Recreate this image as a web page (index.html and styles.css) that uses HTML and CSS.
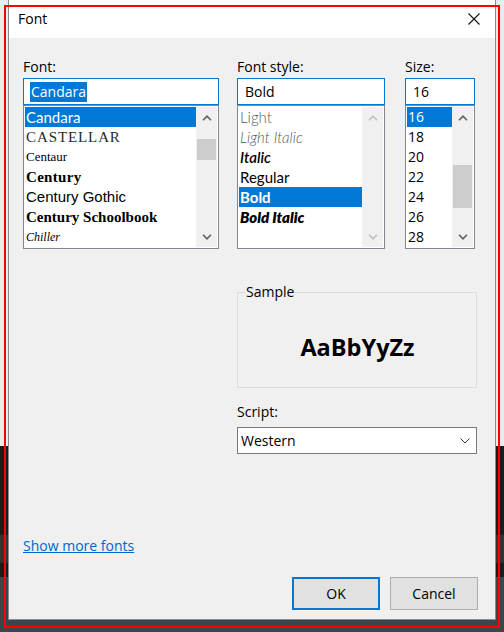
FILE: index.html
```html
<!DOCTYPE html>
<html lang="en">
<head>
<meta charset="utf-8">
<title>Font</title>
<link rel="stylesheet" href="styles.css">
</head>
<body>
<div class="desktop">
  <div class="dialog">
    <div class="titlebar">
      <span class="title">Font</span>
      <svg class="close" viewBox="0 0 12 12" width="12" height="12"><path d="M0.5 0.5L11.5 11.5M11.5 0.5L0.5 11.5"/></svg>
    </div>
    <div class="body">
      <div class="pickers">
        <div class="col col-font">
          <div class="lbl">Font:</div>
          <div class="field focused"><span class="sel-text">Candara</span></div>
          <div class="list">
            <ul class="rows">
              <li class="row selected f-candara">Candara</li>
              <li class="row f-castellar">CASTELLAR</li>
              <li class="row f-centaur">Centaur</li>
              <li class="row f-century">Century</li>
              <li class="row f-gothic">Century Gothic</li>
              <li class="row f-school">Century Schoolbook</li>
              <li class="row f-chiller">Chiller</li>
            </ul>
            <div class="sb">
              <div class="sb-btn"><svg viewBox="0 0 10 6" width="10" height="6"><path d="M1 5.2L5 1.2L9 5.2"/></svg></div>
              <div class="sb-track"><div class="thumb thumb-font"></div></div>
              <div class="sb-btn"><svg viewBox="0 0 10 6" width="10" height="6"><path d="M1 0.8L5 4.8L9 0.8"/></svg></div>
            </div>
          </div>
        </div>
        <div class="col col-style">
          <div class="lbl">Font style:</div>
          <div class="field focused"><span class="plain-text">Bold</span></div>
          <div class="list">
            <ul class="rows">
              <li class="row s-light">Light</li>
              <li class="row s-light-italic">Light Italic</li>
              <li class="row s-italic">Italic</li>
              <li class="row s-regular">Regular</li>
              <li class="row selected s-bold">Bold</li>
              <li class="row s-bold-italic">Bold Italic</li>
            </ul>
            <div class="sb disabled">
              <div class="sb-btn"><svg viewBox="0 0 10 6" width="10" height="6"><path d="M1 5.2L5 1.2L9 5.2"/></svg></div>
              <div class="sb-track"></div>
              <div class="sb-btn"><svg viewBox="0 0 10 6" width="10" height="6"><path d="M1 0.8L5 4.8L9 0.8"/></svg></div>
            </div>
          </div>
        </div>
        <div class="col col-size">
          <div class="lbl">Size:</div>
          <div class="field focused"><span class="plain-text size-text">16</span></div>
          <div class="list">
            <ul class="rows">
              <li class="row selected num">16</li>
              <li class="row num">18</li>
              <li class="row num">20</li>
              <li class="row num">22</li>
              <li class="row num">24</li>
              <li class="row num">26</li>
              <li class="row num">28</li>
            </ul>
            <div class="sb">
              <div class="sb-btn"><svg viewBox="0 0 10 6" width="10" height="6"><path d="M1 5.2L5 1.2L9 5.2"/></svg></div>
              <div class="sb-track"><div class="thumb thumb-size"></div></div>
              <div class="sb-btn"><svg viewBox="0 0 10 6" width="10" height="6"><path d="M1 0.8L5 4.8L9 0.8"/></svg></div>
            </div>
          </div>
        </div>
      </div>

      <div class="lower">
        <fieldset class="sample">
          <legend>Sample</legend>
          <div class="sample-text">AaBbYyZz</div>
        </fieldset>
        <div class="lbl script-lbl">Script:</div>
        <div class="combo">
          <span>Western</span>
          <svg viewBox="0 0 10 6" width="10" height="6"><path d="M0.5 0.5L5 5L9.5 0.5"/></svg>
        </div>
      </div>

      <div class="footer">
        <a class="more" href="#">Show more fonts</a>
        <div class="buttons">
          <button class="btn default">OK</button>
          <button class="btn">Cancel</button>
        </div>
      </div>
    </div>
  </div>
  <div class="frame"></div>
</div>
</body>
</html>
```

FILE: styles.css
```css
* { box-sizing: border-box; }
html, body { margin: 0; padding: 0; }
body {
  width: 504px;
  height: 632px;
  overflow: hidden;
  font-family: "Open Sans", "Noto Sans", sans-serif;
  font-size: 14px;
  color: #000;
}
.desktop {
  position: relative;
  width: 504px;
  height: 632px;
  background: linear-gradient(to bottom,
    #ececec 0, #ececec 446px,
    #1b1b1b 446px, #1b1b1b 535px,
    #323232 535px, #323232 563px,
    #1b1b1b 563px, #1b1b1b 577px,
    #3b464c 577px);
}
.dialog {
  margin-left: 8px;
  width: 488px;
  height: 620px;
  border: 1px solid #8a8a8a;
  border-top: none;
  background: #f0f0f0;
  display: flex;
  flex-direction: column;
}
.titlebar {
  height: 38px;
  flex: none;
  background: #fff;
  display: flex;
  align-items: center;
  justify-content: space-between;
  padding: 0 15px 0 9px;
}
.title { font-size: 14px; line-height: 20px; }
.close path { stroke: #111; stroke-width: 1.1; fill: none; }

.body {
  flex: 1;
  display: flex;
  flex-direction: column;
  padding: 0 18px 9px 14px;
}
.pickers {
  display: grid;
  grid-template-columns: 196px 148px 72px;
  column-gap: 18px;
  margin-top: 19px;
}
.col-size { margin-left: 2px; }
.lbl { line-height: 20px; height: 21px; }
.field {
  height: 27px;
  background: #fff;
  border: 1px solid #7a7a7a;
  display: flex;
  align-items: center;
  padding-left: 6px;
}
.field.focused { border-color: #0078d7; }
.sel-text {
  background: #0078d7;
  color: #fff;
  line-height: 20px;
  padding: 0 1px;
}
.plain-text { padding-left: 1px; line-height: 20px; }
.size-text { padding-left: 1px; }
.list {
  height: 144px;
  background: #fff;
  border: 1px solid #828790;
  padding: 1px;
  display: flex;
}
.rows {
  list-style: none;
  margin: 0;
  padding: 0;
  flex: 1;
  overflow: hidden;
}
.row {
  height: 20px;
  line-height: 20px;
  padding-left: 1px;
  white-space: nowrap;
  overflow: hidden;
}
.row.selected { background: #0078d7; color: #fff; }

.sb {
  width: 21px;
  flex: none;
  background: #f0f0f0;
  display: flex;
  flex-direction: column;
}
.sb-btn {
  height: 21px;
  display: flex;
  align-items: center;
  justify-content: center;
}
.sb-btn path { stroke: #606060; stroke-width: 1.6; fill: none; }
.sb.disabled .sb-btn path { stroke: #c0c0c0; }
.sb-track { flex: 1; }
.thumb { background: #cdcdcd; margin: 0 1px; }
.thumb-font { margin-top: 11px; height: 21px; }
.thumb-size { margin-top: 37px; height: 43px; }

/* font list previews */
.f-candara { font-family: Lato, sans-serif; font-size: 15px; }
.f-castellar { font-family: "Liberation Serif", serif; font-size: 15px; letter-spacing: 0.9px; color: #2a2a2a; }
.f-centaur { font-family: "Liberation Serif", serif; font-size: 13px; }
.f-century { font-family: "Liberation Serif", serif; font-size: 15px; font-weight: 700; letter-spacing: 0.3px; }
.f-gothic { font-family: "Liberation Sans", sans-serif; font-size: 15px; }
.f-school { font-family: "Liberation Serif", serif; font-size: 15px; font-weight: 700; }
.f-chiller { font-family: "Liberation Serif", serif; font-size: 12px; font-style: italic; }

/* style list previews */
.s-light, .s-light-italic, .s-italic, .s-regular, .s-bold, .s-bold-italic {
  font-family: Lato, sans-serif;
  font-size: 15px;
}
.s-light { font-weight: 300; color: #5a5a5a; }
.s-light-italic { font-weight: 300; font-style: italic; color: #5a5a5a; }
.s-italic { font-weight: 600; font-style: italic; }
.s-regular { font-weight: 400; }
.s-bold { font-weight: 700; }
.s-bold-italic { font-weight: 800; font-style: italic; }
.num { padding-left: 1px; }

.lower {
  margin-left: 214px;
  width: 240px;
  margin-top: 35px;
}
.sample {
  margin: 0;
  padding: 0;
  height: 104px;
  border: 1px solid #dcdcdc;
  display: flex;
  justify-content: center;
}
.sample legend {
  padding: 0 1px;
  margin-left: 7px;
  line-height: 16px;
}
.sample-text {
  font-family: "Open Sans", sans-serif;
  font-weight: 700;
  font-size: 23.5px;
  line-height: 30px;
  margin-top: 32px;
  margin-left: 1px;
}
.script-lbl { margin-top: 14px; height: 24px; }
.combo {
  height: 27px;
  margin-top: 1px;
  background: #fff;
  border: 1px solid #7a7a7a;
  display: flex;
  align-items: center;
  justify-content: space-between;
  padding: 0 6px 0 3px;
}
.combo path { stroke: #333; stroke-width: 1; fill: none; }

.footer {
  margin-top: auto;
  display: flex;
  flex-direction: column;
}
.more {
  align-self: flex-start;
  color: #0066cc;
  text-decoration: underline;
  line-height: 20px;
  margin-bottom: 21px;
}
.buttons {
  display: flex;
  justify-content: flex-end;
  gap: 10px;
  margin-right: -1px;
}
.btn {
  width: 88px;
  height: 33px;
  background: #e1e1e1;
  border: 1px solid #adadad;
  font-family: "Open Sans", "Noto Sans", sans-serif;
  font-size: 14px;
  color: #000;
  padding: 0;
}
.btn.default { border: 2px solid #0078d7; }

.frame {
  position: absolute;
  left: 4px;
  top: 5px;
  width: 496px;
  height: 623px;
  border: 2px solid #ff0000;
  pointer-events: none;
}
```
